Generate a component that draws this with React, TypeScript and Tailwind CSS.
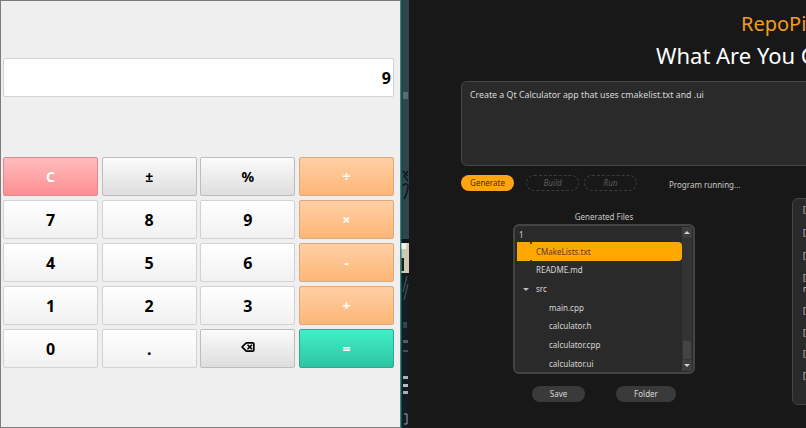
import React from 'react';
import { Delete } from 'lucide-react';

const font = { fontFamily: '"Noto Sans", "Open Sans", sans-serif' };

const plain = 'border border-[#d2d2d2] bg-gradient-to-b from-white to-[#f1f1f1] text-black';
const grey = 'border border-[#bdbdbd] bg-gradient-to-b from-[#fbfbfb] to-[#dedede] text-black';
const orange = 'border border-[#e0a878] bg-gradient-to-b from-[#ffcfa3] to-[#fdb677] text-white';
const red = 'border border-[#dc8a8e] bg-gradient-to-b from-[#ffbcbe] to-[#fc8e92] text-white';
const green = 'border border-[#2ea98f] bg-gradient-to-b from-[#40f0c8] to-[#2dc4a2] text-white';

const keys: { label: string; cls: string }[] = [
  { label: 'C', cls: red },
  { label: '±', cls: grey },
  { label: '%', cls: grey },
  { label: '÷', cls: orange },
  { label: '7', cls: plain },
  { label: '8', cls: plain },
  { label: '9', cls: plain },
  { label: '×', cls: orange },
  { label: '4', cls: plain },
  { label: '5', cls: plain },
  { label: '6', cls: plain },
  { label: '-', cls: orange },
  { label: '1', cls: plain },
  { label: '2', cls: plain },
  { label: '3', cls: plain },
  { label: '+', cls: orange },
  { label: '0', cls: plain },
  { label: '.', cls: plain },
  { label: 'back', cls: grey },
  { label: '=', cls: green },
];

const Calculator = () => (
  <div className="w-[400px] h-full shrink-0 bg-[#efefef] border-l border-t border-b border-[#7c7c7c] pl-[2px] pr-[6px] pt-[57px] flex flex-col">
    <div className="h-[39px] bg-white border border-[#d2d2d2] rounded-[2px] flex items-center justify-end pr-[2px] text-[16px] font-bold text-black">
      9
    </div>
    <div className="mt-[60px] grid grid-cols-4 gap-x-[3.5px] gap-y-[4px] auto-rows-[39px]">
      {keys.map(k => (
        <button key={k.label} className={`rounded-[2px] flex items-center justify-center font-bold ${k.cls} ${k.cls === plain ? 'text-[16px]' : 'text-[14px]'}`}>
          {k.label === 'back' ? <Delete size={14} strokeWidth={3} className="-mt-[3px]" /> : k.label}
        </button>
      ))}
    </div>
  </div>
);

// sliver of the desktop wallpaper between the two windows
const Wallpaper = () => (
  <svg width="9" height="428" viewBox="0 0 9 428" className="block shrink-0">
    <rect width="9" height="428" fill="#2f4650" />
    <rect x="0" width="1.5" height="428" fill="#2e8f80" />
    <rect x="1.5" y="0" width="1" height="240" fill="#27373f" />
    <rect x="3" y="92" width="5" height="7" fill="#5a6b74" />
    <path d="M3 171 L8 176 M8 171 L4 176 M4 176 L8 181 M3 186 Q5 182 8 185 Q8 192 4 199" stroke="#10181c" strokeWidth="1.6" fill="none" />
    <rect x="1.5" y="239" width="7.5" height="4" fill="#10151a" />
    <rect x="1.5" y="243" width="7.5" height="30" fill="#cfc8b4" />
    <rect x="1.5" y="243" width="5" height="6" fill="#f2f0ea" />
    <rect x="1.5" y="258" width="2.5" height="13" fill="#1c1c18" />
    <rect x="1.5" y="273" width="7.5" height="155" fill="#141c22" />
    <path d="M3 292 L7 276 M4 300 L8 284" stroke="#3e5560" strokeWidth="1.2" />
    <rect x="3" y="322" width="4" height="6" fill="#32454f" />
    <rect x="3" y="340" width="5" height="3" fill="#4a5e68" />
    <rect x="3" y="350" width="5" height="2" fill="#3d4f58" />
    <rect x="3" y="376" width="5" height="3" fill="#a8b4ba" />
    <rect x="3" y="384" width="5" height="3" fill="#b4bfc4" />
    <rect x="3" y="391" width="5" height="3" fill="#a0adb3" />
    <path d="M4 414 L7 414 L7 424 L4 424" stroke="#9aa6ab" strokeWidth="1" fill="none" />
  </svg>
);

const rows = [
  { name: 'README.md', indent: 'pl-[19px]' },
  { name: 'src', indent: 'pl-[19px]', open: true },
  { name: 'main.cpp', indent: 'pl-[32px]' },
  { name: 'calculator.h', indent: 'pl-[32px]' },
  { name: 'calculator.cpp', indent: 'pl-[32px]' },
  { name: 'calculator.ui', indent: 'pl-[32px]' },
];

const FileTree = () => (
  <div className="w-[182px] h-[150px] bg-[#2a2a2a] border-2 border-[#444444] rounded-[6px] flex overflow-hidden text-[8px] text-[#d8d8d8]">
    <div className="w-[167px] pl-[2px] pt-[1px]">
      <div className="h-[15px] pl-[2px] flex items-center text-[8px] text-[#cfcfcf]">1</div>
      <div className="relative h-[19px] bg-[#ffa800] rounded-r-[4px] pl-[19px] flex items-center text-[#5a3c00]">
        CMakeLists.txt
        <span className="absolute left-[13px] top-0 w-[2px] h-[1.5px] bg-[#5a3c00]" />
        <span className="absolute left-[13px] bottom-0 w-[2px] h-[1.5px] bg-[#5a3c00]" />
      </div>
      {rows.map(r => (
        <div key={r.name} className={`relative h-[18.7px] flex items-center ${r.indent}`}>
          {r.open && <span className="absolute left-[6px] top-[8px] w-0 h-0 border-l-[3px] border-r-[3px] border-t-[3px] border-l-transparent border-r-transparent border-t-[#bbbbbb]" />}
          {r.name}
        </div>
      ))}
    </div>
    <div className="w-[10px] mt-[1px] mb-[1px] bg-[#333333] flex flex-col items-center">
      <div className="w-[10px] h-[11px] bg-[#3e3e3e] flex items-center justify-center">
        <span className="w-0 h-0 border-l-[3px] border-r-[3px] border-b-[3px] border-l-transparent border-r-transparent border-b-[#d0d0d0]" />
      </div>
      <div className="flex-1" />
      <div className="w-[8px] h-[18px] bg-[#444444]" />
      <div className="w-[10px] h-[11px] mt-[1px] bg-[#3e3e3e] flex items-center justify-center">
        <span className="w-0 h-0 border-l-[3px] border-r-[3px] border-t-[3px] border-l-transparent border-r-transparent border-t-[#d0d0d0]" />
      </div>
    </div>
  </div>
);

const logLines = [
  { h: 'h-[23px]', t: '[' },
  { h: 'h-[23px]', t: '[' },
  { h: 'h-[22px]', t: '[' },
  { h: 'h-[11px]', t: '[' },
  { h: 'h-[22px]', t: 'm' },
  { h: 'h-[22px]', t: '[' },
  { h: 'h-[21px]', t: '[' },
  { h: 'h-[22px]', t: '[' },
  { h: 'h-[11px]', t: '["' },
];

const Dashed = ({ label }: { label: string }) => (
  <div className="w-[53px] h-[16px] rounded-[8px] border border-dashed border-[#3c3c3c] flex items-center justify-center italic text-[8px] text-[#5c5c5c]">
    {label}
  </div>
);

const Pill = ({ label, w }: { label: string; w: string }) => (
  <div className={`${w} h-[16px] rounded-[8px] bg-[#3a3a3a] flex items-center justify-center text-[8px] text-[#d8d8d8]`}>
    {label}
  </div>
);

const RepoPilot = () => (
  <div className="flex-1 min-w-0 h-full bg-[#181818] overflow-hidden whitespace-nowrap">
    <div className="h-[36px] pl-[332px] pt-[10px] text-[20px] leading-[27px] text-[#f39c1f]">RepoPi</div>
    <div className="h-[45px] pl-[247px] pt-[4px] text-[22px] leading-[30px] text-white">What Are You C</div>
    <div className="ml-[52px] w-[400px] h-[85px] bg-[#2a2a2a] border border-[#464646] rounded-[6px] pl-[8px] pt-[7px] text-[8.8px] leading-[13px] text-[#d8d8d8]">
      Create a Qt Calculator app that uses cmakelist.txt and .ui
    </div>
    <div className="mt-[9px] ml-[52px] flex items-center">
      <div className="w-[53px] h-[16px] rounded-[8px] bg-[#ffa50f] flex items-center justify-center text-[8px] text-[#4a3000]">
        Generate
      </div>
      <div className="ml-[12px]"><Dashed label="Build" /></div>
      <div className="ml-[5px]"><Dashed label="Run" /></div>
      <div className="ml-[32px] mt-[3px] text-[8px] text-[#c8c8c8]">Program running...</div>
    </div>
    <div className="mt-[7px] flex items-start">
      <div className="ml-[104px] w-[182px] pt-[12px] flex flex-col items-center">
        <div className="h-[14px] leading-[14px] text-[8px] text-[#c8c8c8]">Generated Files</div>
        <FileTree />
        <div className="mt-[12px] w-full flex">
          <div className="ml-[19px]"><Pill label="Save" w="w-[53px]" /></div>
          <div className="ml-[31px]"><Pill label="Folder" w="w-[60px]" /></div>
        </div>
      </div>
      <div className="ml-[97px] w-[60px] h-[207px] bg-[#2a2a2a] border border-[#444444] rounded-l-[6px] pl-[10px] pt-[5px] text-[8px] leading-[11px] text-[#d0d0d0]">
        {logLines.map((l, i) => (
          <div key={i} className={l.h}>{l.t}</div>
        ))}
      </div>
    </div>
  </div>
);

export default function App() {
  return (
    <div className="w-[806px] h-[428px] flex overflow-hidden bg-[#181818]" style={font}>
      <Calculator />
      <Wallpaper />
      <RepoPilot />
    </div>
  );
}
